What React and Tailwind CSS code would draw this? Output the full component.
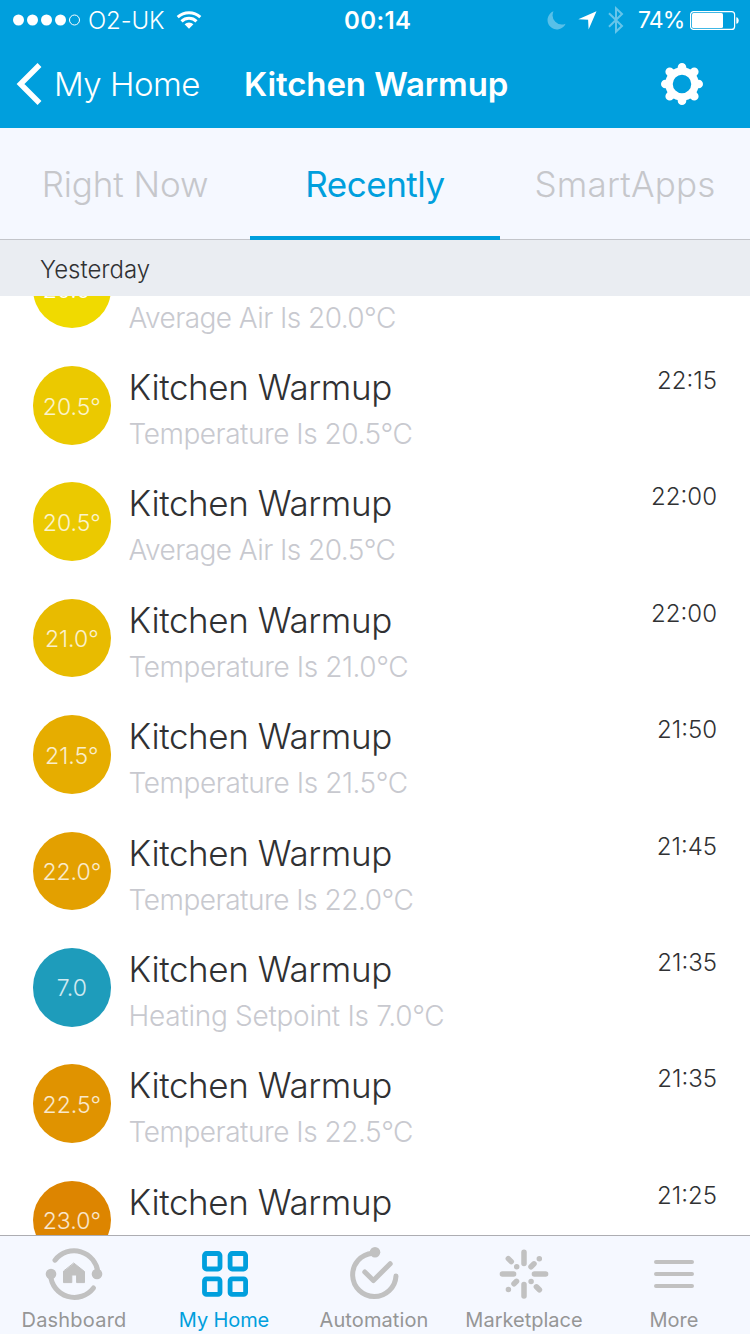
const eventos = [
  { id: 1, badge: '20.0°', cor: 'bg-[#f0da00] text-white', texto: 'Average Air Is 20.0°C', hora: '', espaco: 'tracking-[-0.55px]' },
  { id: 2, badge: '20.5°', cor: 'bg-[#ebc900] text-white/80', texto: 'Temperature Is 20.5°C', hora: '22:15', espaco: 'tracking-[-0.47px]' },
  { id: 3, badge: '20.5°', cor: 'bg-[#ebc900] text-white/80', texto: 'Average Air Is 20.5°C', hora: '22:00', espaco: 'tracking-[-0.55px]' },
  { id: 4, badge: '21.0°', cor: 'bg-[#e8bb00] text-white/80', texto: 'Temperature Is 21.0°C', hora: '22:00', espaco: 'tracking-[-0.43px]' },
  { id: 5, badge: '21.5°', cor: 'bg-[#e6ad00] text-white/80', texto: 'Temperature Is 21.5°C', hora: '21:50', espaco: 'tracking-[-0.43px]' },
  { id: 6, badge: '22.0°', cor: 'bg-[#e3a000] text-white/80', texto: 'Temperature Is 22.0°C', hora: '21:45', espaco: 'tracking-[-0.47px]' },
  { id: 7, badge: '7.0', cor: 'bg-[#1e9cbb] text-white/80', texto: 'Heating Setpoint Is 7.0°C', hora: '21:35', espaco: 'tracking-[-0.28px]' },
  { id: 8, badge: '22.5°', cor: 'bg-[#e09300] text-white/80', texto: 'Temperature Is 22.5°C', hora: '21:35', espaco: 'tracking-[-0.47px]' },
  { id: 9, badge: '23.0°', cor: 'bg-[#dd8500] text-white/80', texto: 'Temperature Is 23.0°C', hora: '21:25', espaco: 'tracking-[-0.47px]' },
];

function StatusBar() {
  return (
    <div className="h-10 flex items-center justify-between relative text-2xl">
      <div className="flex items-center pl-[13px]">
        <svg width="68" height="12" viewBox="0 0 68 12" fill="white">
          <circle cx="5.5" cy="6" r="5.5" />
          <circle cx="19.5" cy="6" r="5.5" />
          <circle cx="33.5" cy="6" r="5.5" />
          <circle cx="47.5" cy="6" r="5.5" />
          <circle cx="61.5" cy="6" r="5" fill="none" stroke="white" />
        </svg>
        <span className="ml-[7px] pt-[2px] w-[88px] whitespace-nowrap font-light tracking-[-0.1px]">O2-UK</span>
        <svg width="26" height="20" viewBox="0 0 26 20" fill="none" stroke="white" strokeWidth="3">
          <path d="M1.7 7.2a16.4 16.4 0 0 1 22.6 0" />
          <path d="M5.5 11.4a10.8 10.8 0 0 1 15 0" />
          <path d="M13 18.8 8.6 14.3a6.4 6.4 0 0 1 8.8 0z" fill="white" stroke="none" />
        </svg>
      </div>
      <span className="absolute left-[344px] top-0 leading-[41px] font-semibold tracking-[0.4px]">00:14</span>
      <div className="flex items-center pr-[11px]">
        <svg width="19" height="19" viewBox="0 0 19 19" className="opacity-35">
          <path d="M6.5 0.3A9.4 9.4 0 1 0 18.6 12.7 9.3 9.3 0 0 1 6.5 0.3z" fill="white" />
        </svg>
        <svg width="19" height="19" viewBox="0 0 19 19" className="ml-3">
          <path d="M18.5 0.3 0.3 8.2l9.8 0.6 0.5 9.7z" fill="white" />
        </svg>
        <svg width="16" height="28" viewBox="0 0 16 28" className="ml-[11px] opacity-40" fill="none" stroke="white" strokeWidth="2">
          <path d="M1 7.2 14 20 8 25.6V2.4L14 8 1 20.8" />
        </svg>
        <span className="ml-[14px] pt-px w-[47px] whitespace-nowrap text-[23px] tracking-[-0.9px]">74%</span>
        <svg width="49" height="19" viewBox="0 0 49 19" className="ml-[5px]">
          <rect x="0.6" y="0.6" width="44" height="17.8" rx="3" fill="none" stroke="white" strokeWidth="1.2" />
          <rect x="2" y="2" width="31" height="15" rx="1.5" fill="white" />
          <path d="M46.3 6.2c1.4 0 2.4 1.3 2.4 3.3s-1 3.3-2.4 3.3z" fill="white" />
        </svg>
      </div>
    </div>
  );
}

function Header() {
  return (
    <header className="h-32 shrink-0 bg-[#009fdd] text-white">
      <StatusBar />
      <div className="h-[88px] flex items-center">
        <svg width="26" height="42" viewBox="0 0 26 42" className="ml-4" fill="none" stroke="white" strokeWidth="5.5">
          <path d="M23.5 2 4.5 21l19 19" />
        </svg>
        <span className="ml-3 pt-[2px] w-[190px] text-[33px] font-light tracking-[-0.5px] whitespace-nowrap">My Home</span>
        <h1 className="pt-[2px] w-[416px] text-[33px] font-semibold tracking-[-0.1px] whitespace-nowrap">Kitchen Warmup</h1>
        <svg width="44" height="44" viewBox="-22 -22 44 44">
          <circle r="13" fill="none" stroke="white" strokeWidth="7.5" />
          <g stroke="white" strokeWidth="8.6" strokeLinecap="round">
            <path d="M0 -16.7v2M0 16.7v-2M-16.7 0h2M16.7 0h-2" />
            <path d="M-12.3 -12.3l1.4 1.4M12.3 -12.3l-1.4 1.4M-12.3 12.3l1.4 -1.4M12.3 12.3l-1.4 -1.4" />
          </g>
        </svg>
      </div>
    </header>
  );
}

function Tabs() {
  return (
    <nav className="h-28 shrink-0 grid grid-cols-3 bg-[#f5f8ff] text-center text-[35px] font-light leading-[112px] text-[#c6c7cb]">
      <div className="h-28 border-b border-[#c3c5ca] tracking-[-0.1px]">Right Now</div>
      <div className="h-28 border-b-4 border-[#009fdd] text-[#009fdd] font-normal tracking-[-0.5px]">Recently</div>
      <div className="h-28 border-b border-[#c3c5ca] tracking-[0.2px]">SmartApps</div>
    </nav>
  );
}

function Evento({ evento }) {
  return (
    <li className="h-[116.4px] flex pl-[32.5px] pr-[33px]">
      <div className={`mt-[18.9px] size-[78.6px] pt-[3px] shrink-0 rounded-full flex items-center justify-center text-[23px] font-light ${evento.cor}`}>
        {evento.badge}
      </div>
      <div className="ml-[17.5px] pt-4 flex-1 font-light whitespace-nowrap">
        <p className="text-[35px] leading-[48px] tracking-[-0.4px] text-[#303133]">Kitchen Warmup</p>
        <p className={`text-[28px] leading-[46px] text-[#c8c9cf] ${evento.espaco}`}>{evento.texto}</p>
      </div>
      <span className="pt-4 text-2xl leading-[35px] font-light text-[#303133]">{evento.hora}</span>
    </li>
  );
}

function TabBar() {
  return (
    <footer className="h-[99px] shrink-0 grid grid-cols-5 border-t border-[#adadb2] bg-[#f5f8ff] text-xl text-[#969696]">
      <div className="flex flex-col items-center pr-[2px]">
        <svg width="60" height="64" viewBox="0 0 60 64" className="mt-1.5" fill="none" stroke="#c1c1c1" strokeWidth="5" strokeLinecap="round">
          <path d="M11 18.2A24 24 0 0 1 54 31" />
          <path d="M6.5 33A24 24 0 0 0 49.5 46" />
          <circle cx="53" cy="32" r="5.3" fill="#c1c1c1" stroke="none" />
          <circle cx="7" cy="32" r="5.3" fill="#c1c1c1" stroke="none" />
          <path d="M30 21.2 40.5 29.5V40.6H32.6V33H27.8V40.6H19.5V29.5z" fill="#c1c1c1" stroke="#c1c1c1" strokeWidth="1" />
        </svg>
        <span className="tracking-[0.2px]">Dashboard</span>
      </div>
      <div className="flex flex-col items-center pr-[2px] text-[#009fdd]">
        <svg width="60" height="64" viewBox="0 0 60 64" className="mt-1.5" fill="none" stroke="#009fdd" strokeWidth="4.8">
          <rect x="10.5" y="11.5" width="15.5" height="15.5" rx="2" />
          <rect x="36.1" y="11.5" width="15.5" height="15.5" rx="2" />
          <rect x="10.5" y="36.9" width="15.5" height="15.5" rx="2" />
          <rect x="36.1" y="36.9" width="15.5" height="15.5" rx="2" />
        </svg>
        <span className="tracking-[-0.1px]">My Home</span>
      </div>
      <div className="flex flex-col items-center pr-[2px]">
        <svg width="60" height="64" viewBox="0 0 60 64" className="mt-1.5" fill="none" stroke="#c1c1c1" strokeWidth="5" strokeLinecap="round" strokeLinejoin="round">
          <path d="M28.5 11.2A21.7 21.7 0 1 0 52 34" />
          <circle cx="31" cy="10.2" r="5.3" fill="#c1c1c1" stroke="none" />
          <path d="M20.8 30 29.4 38.5 46.2 21.7" />
        </svg>
        <span className="tracking-[0.1px]">Automation</span>
      </div>
      <div className="flex flex-col items-center pr-[2px]">
        <svg width="60" height="64" viewBox="0 0 60 64" className="mt-1.5" stroke="#c1c1c1" strokeWidth="5.5" strokeLinecap="round">
          <path d="M30 10.3v11.3M30 42.5v11.4M8.4 32h11.2M40.4 32h11.2" />
          <path d="M14.3 16.6l3 3M40 21.8l-3 3M22.5 39.3l-2.5 2.5M42.4 44.8l3 3" />
          <path d="M45.3 16.7h.01M22.7 24.8h.01M37.1 39.4h.01M14.4 47.4h.01" />
        </svg>
        <span>Marketplace</span>
      </div>
      <div className="flex flex-col items-center pr-[2px]">
        <svg width="60" height="64" viewBox="0 0 60 64" className="mt-1.5" stroke="#c1c1c1" strokeWidth="4" strokeLinecap="round">
          <path d="M12 20h36M12 32h36M12 44h36" />
        </svg>
        <span>More</span>
      </div>
    </footer>
  );
}

export default function App() {
  return (
    <div className="w-[750px] h-[1334px] flex flex-col overflow-hidden bg-white font-['Inter',sans-serif]">
      <Header />
      <Tabs />
      <div className="h-14 shrink-0 pl-10 bg-[#eaedf2] text-2xl leading-[60px] font-light text-[#303133]">Yesterday</div>
      <main className="flex-1 min-h-0 overflow-hidden">
        <ul className="-mt-[65.3px]">
          {eventos.map((evento) => (
            <Evento key={evento.id} evento={evento} />
          ))}
        </ul>
      </main>
      <TabBar />
    </div>
  );
}
